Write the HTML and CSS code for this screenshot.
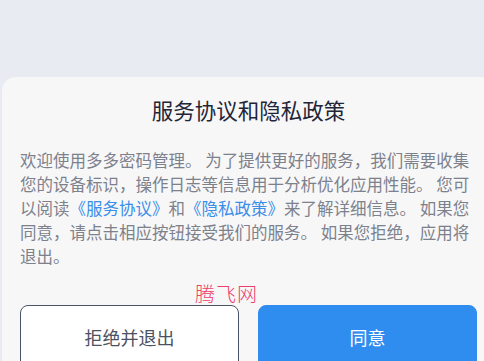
FILE: index.html
```html
<!DOCTYPE html>
<html lang="zh-CN">
  <head>
    <meta charset="UTF-8" />
    <meta name="viewport" content="width=device-width, initial-scale=1.0" />
    <title>服务协议和隐私政策</title>
    <link rel="stylesheet" href="styles.css">
  </head>
  <body>
    <section class="sheet">
      <h1 class="sheet-title">服务协议和隐私政策</h1>
      <p class="sheet-text">
        欢迎使用多多密码管理。 为了提供更好的服务，我们需要收集您的设备标识，操作日志等信息用于分析优化应用性能。 您可以阅读<a href="#" class="link">《服务协议》</a>和<a href="#" class="link">《隐私政策》</a>来了解详细信息。 如果您同意，请点击相应按钮接受我们的服务。 如果您拒绝，应用将退出。
      </p>
      <div class="actions">
        <button class="btn btn-reject">拒绝并退出</button>
        <button class="btn btn-agree">同意</button>
      </div>
    </section>
    <div class="watermark">腾飞网</div>
  </body>
</html>
```

FILE: styles.css
```css
html,
body {
  margin: 0;
  padding: 0;
  overflow: hidden;
}

body {
  background: #e8ebf2;
  font-family: "Noto Sans CJK SC", "Noto Sans", sans-serif;
  height: 361px;
  position: relative;
}

.sheet {
  box-sizing: border-box;
  margin: 77px 0 0 2px;
  width: 493px;
  height: 300px;
  padding: 19px 18px 0 18px;
  background: #f7f7f8;
  border-radius: 14px 14px 0 0;
}

.sheet-title {
  margin: 0;
  font-size: 21.5px;
  line-height: 28px;
  font-weight: 400;
  color: #1f2637;
  text-align: center;
}

.sheet-text {
  margin: 24px 0 0 0;
  padding-right: 6px;
  font-size: 16.5px;
  line-height: 24px;
  color: #7d818c;
}

.link {
  color: #3a8ee8;
  text-decoration: none;
}

.actions {
  display: grid;
  grid-template-columns: 1fr 1fr;
  gap: 19px;
  margin-top: 37px;
}

.btn {
  height: 64px;
  border-radius: 8px;
  font-family: inherit;
  font-size: 18px;
  cursor: pointer;
}

.btn-reject {
  background: #ffffff;
  border: 1px solid #4a5468;
  color: #4b5262;
}

.btn-agree {
  background: #2f8def;
  border: 1px solid #2f8def;
  color: #ffffff;
}

.watermark {
  position: absolute;
  left: 195px;
  top: 282px;
  font-size: 20px;
  line-height: 24px;
  font-weight: 300;
  color: #ee3f6a;
  letter-spacing: 1px;
}
```
